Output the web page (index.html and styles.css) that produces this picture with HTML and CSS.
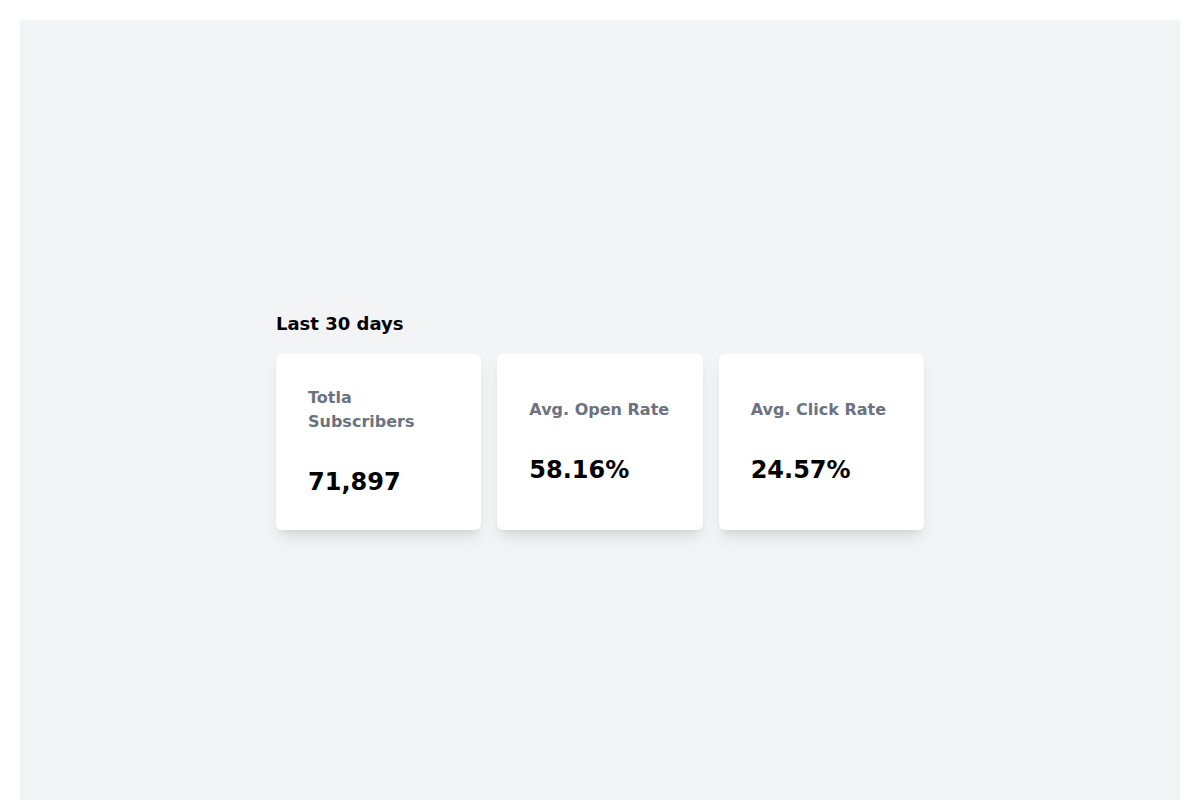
FILE: index.html
```html
<!DOCTYPE html>
<html>
<head>
<meta charset="utf-8">
<link rel="stylesheet" href="styles.css">
</head>
<body>
<div class="page">
  <div class="section">
    <h3 class="title">Last 30 days</h3>
    <dl class="stats">
      <div class="card">
        <dt class="label">Totla Subscribers</dt>
        <dd class="value">71,897</dd>
      </div>
      <div class="card">
        <dt class="label">Avg. Open Rate</dt>
        <dd class="value">58.16%</dd>
      </div>
      <div class="card">
        <dt class="label">Avg. Click Rate</dt>
        <dd class="value">24.57%</dd>
      </div>
    </dl>
  </div>
</div>
</body>
</html>
```
FILE: styles.css
```css
* { box-sizing: border-box; }
html, body { margin: 0; padding: 0; background: #ffffff; }
body {
  padding: 20px;
  font-family: "DejaVu Sans", sans-serif;
  color: #000;
}
.page {
  background: #f3f4f6;
  min-height: 800px;
  display: flex;
  align-items: center;
  justify-content: center;
}
.section { width: 648px; }
.title {
  margin: 0;
  font-size: 18px;
  line-height: 28px;
  font-weight: 700;
}
.stats {
  margin: 16px 0 0 0;
  display: grid;
  grid-template-columns: repeat(3, 1fr);
  gap: 16px;
}
.card {
  background: #fff;
  border-radius: 6px;
  padding: 32px;
  display: flex;
  flex-direction: column;
  justify-content: center;
  gap: 32px;
  box-shadow: 0 10px 15px -3px rgba(0,0,0,0.1), 0 4px 6px -4px rgba(0,0,0,0.1);
}
.label {
  font-size: 16px;
  line-height: 24px;
  font-weight: 700;
  color: #6b7280;
}
.value {
  margin: 0;
  font-size: 24px;
  line-height: 32px;
  font-weight: 700;
  color: #000;
}
```
